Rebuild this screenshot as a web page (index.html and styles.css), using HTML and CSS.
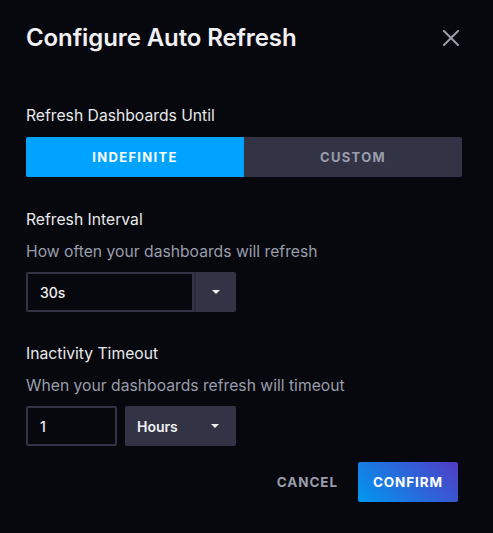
FILE: index.html
```html
<!DOCTYPE html>
<html>
<head>
<meta charset="utf-8">
<link rel="stylesheet" href="styles.css">
</head>
<body>
<div class="dialog">
  <div class="header">
    <h1 class="title">Configure Auto Refresh</h1>
    <button class="close" aria-label="Close">
      <svg width="16" height="16" viewBox="0 0 16 16"><path d="M1 1L15 15M15 1L1 15" stroke="#999dab" stroke-width="2" stroke-linecap="square"/></svg>
    </button>
  </div>
  <div class="body">
    <div class="label first">Refresh Dashboards Until</div>
    <div class="toggle">
      <div class="tog active">INDEFINITE</div>
      <div class="tog">CUSTOM</div>
    </div>

    <div class="label sec">Refresh Interval</div>
    <div class="desc">How often your dashboards will refresh</div>
    <div class="combo">
      <div class="combo-input">30s</div>
      <div class="combo-btn"><span class="caret"></span></div>
    </div>

    <div class="label sec2">Inactivity Timeout</div>
    <div class="desc">When your dashboards refresh will timeout</div>
    <div class="row">
      <div class="num">1</div>
      <div class="select"><span>Hours</span><span class="caret"></span></div>
    </div>

    <div class="footer">
      <button class="cancel">CANCEL</button>
      <button class="confirm">CONFIRM</button>
    </div>
  </div>
</div>
</body>
</html>
```
FILE: styles.css
```css
html, body {
  margin: 0;
  padding: 0;
  background: #07080d;
  height: 100%;
}
body {
  font-family: Inter, "Noto Sans", sans-serif;
  color: #e7e8eb;
}
.dialog {
  padding: 0 31px 0 26px;
}
.header {
  display: flex;
  align-items: center;
  justify-content: space-between;
  height: 76px;
}
.title {
  margin: 0;
  font-size: 24px;
  font-weight: 600;
  color: #f1f1f3;
  letter-spacing: -0.1px;
  line-height: 30px;
  margin-top: -1px;
}
.close {
  background: none;
  border: 0;
  padding: 0;
  width: 16px;
  height: 16px;
  margin-right: 3px;
  display: flex;
}
.label {
  font-size: 15.7px;
  line-height: 20px;
  color: #e7e8eb;
}
.label.first { margin-top: 30px; }
.label.sec { margin-top: 33px; }
.label.sec2 { margin-top: 32px; }
.desc {
  font-size: 15.7px;
  line-height: 20px;
  color: #999dab;
  margin-top: 12px;
}
.toggle {
  margin-top: 11px;
  display: flex;
  height: 40px;
  width: 436px;
  border-radius: 2px;
  overflow: hidden;
  background: #333346;
}
.tog {
  flex: 1;
  display: flex;
  align-items: center;
  justify-content: center;
  font-size: 13px;
  font-weight: 700;
  letter-spacing: 1.3px;
  color: #999dab;
}
.tog.active {
  background: #00a3ff;
  color: #ffffff;
}
.combo {
  margin-top: 10px;
  display: flex;
  width: 210px;
  height: 40px;
}
.combo-input {
  flex: 1;
  border: 2px solid #333346;
  border-radius: 2px 0 0 2px;
  background: #07080d;
  display: flex;
  align-items: center;
  padding-left: 12px;
  font-size: 14px;
  font-weight: 500;
  color: #f1f1f3;
}
.combo-btn {
  width: 40px;
  background: #333346;
  border-radius: 0 2px 2px 0;
  border-left: 2px solid #2a2a3a;
  display: flex;
  align-items: center;
  justify-content: center;
}
.caret {
  width: 0;
  height: 0;
  border-left: 4px solid transparent;
  border-right: 4px solid transparent;
  border-top: 4px solid #f1f1f3;
}
.row {
  margin-top: 10px;
  display: flex;
  gap: 8px;
  height: 40px;
}
.num {
  width: 91px;
  box-sizing: border-box;
  border: 2px solid #333346;
  border-radius: 2px;
  display: flex;
  align-items: center;
  padding-left: 12px;
  font-size: 14px;
  font-weight: 500;
  color: #f1f1f3;
}
.select {
  width: 111px;
  box-sizing: border-box;
  background: #333346;
  border-radius: 2px;
  display: flex;
  align-items: center;
  justify-content: space-between;
  padding: 0 17px 0 12px;
  font-size: 14px;
  font-weight: 600;
  color: #f1f1f3;
}
.footer {
  margin-top: 16px;
  display: flex;
  justify-content: flex-end;
  align-items: center;
  gap: 12px;
  padding-right: 4px;
}
.footer button {
  font-family: inherit;
  border: 0;
  height: 40px;
  font-size: 13.5px;
  font-weight: 700;
  letter-spacing: 0.9px;
  border-radius: 2px;
  cursor: pointer;
}
.cancel {
  background: none;
  color: #999dab;
  padding: 0 8px;
}
.confirm {
  width: 100px;
  color: #ffffff;
  background: linear-gradient(45deg, #0098f0 0%, #513cc6 100%);
}
```
